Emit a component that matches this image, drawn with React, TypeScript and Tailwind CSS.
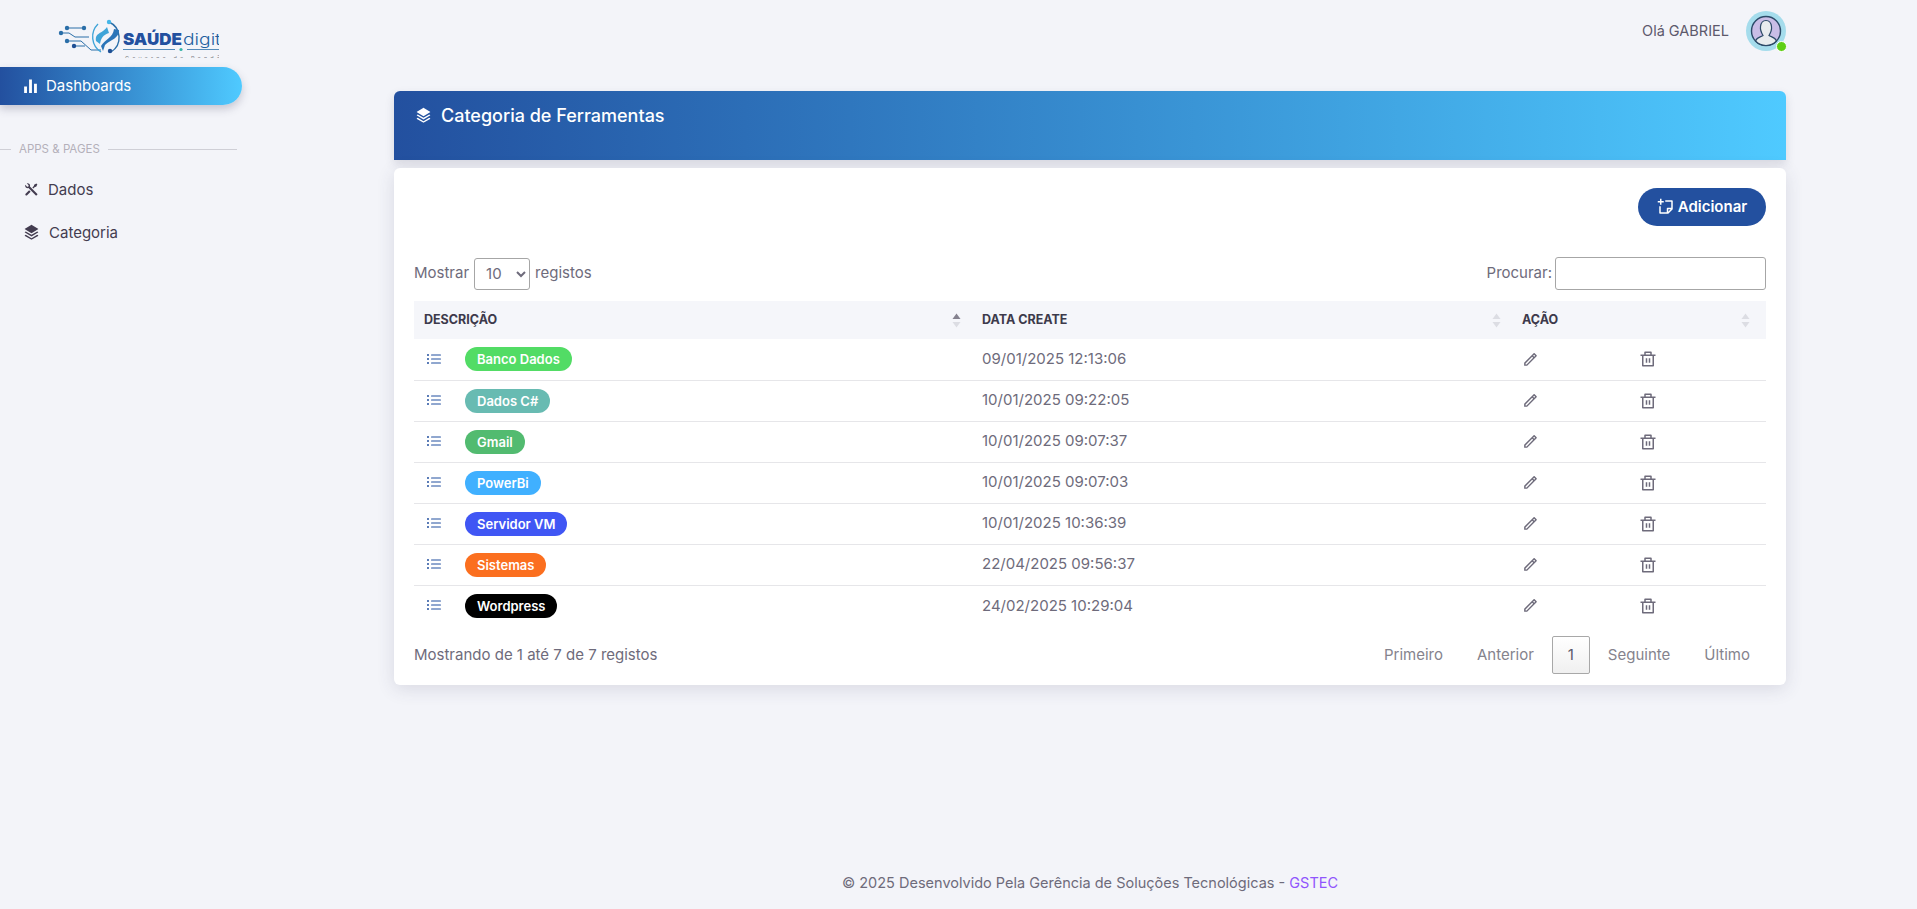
import { RiBarChartFill, RiToolsFill, RiStackFill, RiStickyNoteAddLine, RiPencilLine, RiDeleteBinLine } from 'react-icons/ri';
import { BsListUl } from 'react-icons/bs';

interface Categoria {
  nome: string;
  cor: string;
  data: string;
}

const categorias: Categoria[] = [
  { nome: 'Banco Dados', cor: 'bg-[#52dc65]', data: '09/01/2025 12:13:06' },
  { nome: 'Dados C#', cor: 'bg-[#68bbb2]', data: '10/01/2025 09:22:05' },
  { nome: 'Gmail', cor: 'bg-[#52bb70]', data: '10/01/2025 09:07:37' },
  { nome: 'PowerBi', cor: 'bg-[#40b0ff]', data: '10/01/2025 09:07:03' },
  { nome: 'Servidor VM', cor: 'bg-[#4056f4]', data: '10/01/2025 10:36:39' },
  { nome: 'Sistemas', cor: 'bg-[#fb6f1f]', data: '22/04/2025 09:56:37' },
  { nome: 'Wordpress', cor: 'bg-black', data: '24/02/2025 10:29:04' },
];

function Logo() {
  return (
    <svg viewBox="0 0 190 50" className="h-[50px] w-[190px]">
      <g stroke="#2a6ea8" strokeWidth="1" fill="none">
        <path d="M38 20 H55 M34 25 H40 L46 29 H60 M38 33 H52 L62 42 H72 M45 38 H56" />
        <path d="M69 16 A18 18 0 0 0 72 44" stroke="#3fa4d8" strokeWidth="1.4" />
        <path d="M80 14 A17 17 0 0 1 82 44" stroke="#2a6ea8" strokeWidth="1.4" />
      </g>
      <g fill="#2a6ea8">
        <circle cx="38" cy="20" r="2.2" />
        <circle cx="55" cy="20" r="2.2" />
        <circle cx="32" cy="25" r="2.2" />
        <circle cx="38" cy="33" r="2.2" />
        <circle cx="45" cy="38" r="2.2" fill="#1f4f94" />
        <circle cx="81" cy="43" r="2.2" fill="#1f4f94" />
        <circle cx="80" cy="14" r="2.2" fill="#45b6e8" />
      </g>
      <path d="M67 33 C66 24 72 27 78 19 L80 25 C74 27 72 30 71 36 Z" fill="#3fa4d8" />
      <path d="M90 22 C90 31 82 31 76 37 L74 43 L72 38 C76 31 84 30 85 21 Z" fill="#2a74b8" />
      <text x="94" y="37" fontFamily="Inter, sans-serif" fontWeight="900" fontSize="16.5" fill="#23509f" textLength="59" lengthAdjust="spacingAndGlyphs">SAÚDE</text>
      <text x="154" y="37" fontFamily="Inter, sans-serif" fontWeight="300" fontSize="16" fill="#23609f" textLength="53" lengthAdjust="spacingAndGlyphs">digital</text>
      <path d="M94 41.5 H146 M158 41.5 H209" stroke="#2a6ea8" strokeWidth="0.8" />
      <circle cx="152" cy="41.5" r="1.6" fill="#38b6a8" />
      <text x="96" y="53" fontFamily="Inter, sans-serif" fontSize="5.5" fill="#7d7f86" textLength="112">Governo de Rondônia</text>
    </svg>
  );
}

function Avatar() {
  return (
    <div className="relative h-10 w-10 rounded-full bg-[#a5dcec]">
      <svg viewBox="0 0 40 40" className="h-10 w-10">
        <circle cx="20" cy="20" r="14.5" fill="#c9bde6" stroke="#2c4a68" strokeWidth="1.4" />
        <path d="M9.5 30 C11 26 15 26 17 24.5 C15.5 22 14 19 14.5 15.5 C15 11.5 17.5 9.5 20 9.5 C22.5 9.5 25 11.5 25.5 15.5 C26 19 24.5 22 23 24.5 C25 26 29 26 30.5 30 A14.5 14.5 0 0 1 9.5 30 Z" fill="#e8ecee" stroke="#2c4a68" strokeWidth="1.2" />
      </svg>
      <span className="absolute bottom-[-1px] right-[-1px] h-[11px] w-[11px] rounded-full border-[1.5px] border-white bg-[#5fcf14]" />
    </div>
  );
}

function SortArrows({ active }: { active?: boolean }) {
  return (
    <svg viewBox="0 0 9 15" className="h-[15px] w-[9px]">
      <path d="M4.5 0.5 L8.5 6 H0.5 Z" fill={active ? '#85828f' : '#dcdde3'} />
      <path d="M4.5 14.5 L8.5 9 H0.5 Z" fill="#dcdde3" />
    </svg>
  );
}

export default function App() {
  return (
    <div className="flex min-h-screen bg-[#f3f4f9] font-['Inter',sans-serif] text-[15px] text-[#6e6b7b]">
      <aside className="w-[260px] shrink-0">
        <div className="ml-[29px] h-[67px] pt-[8px]">
          <Logo />
        </div>
        <a className="flex h-[38px] w-[242px] items-center gap-[7px] rounded-r-full bg-gradient-to-r from-[#23509f] to-[#4fcaff] pl-[22px] text-white shadow-[0_4px_8px_rgba(60,60,90,0.25)]">
          <RiBarChartFill className="h-[17px] w-[17px]" />
          <span>Dashboards</span>
        </a>
        <div className="mt-[36px] flex items-center gap-[8px] pr-[23px] text-[11.5px] text-[#b4b0ba]">
          <span className="h-px w-[11px] bg-[#cfcfd6]" />
          <span>APPS &amp; PAGES</span>
          <span className="h-px flex-1 bg-[#cfcfd6]" />
        </div>
        <nav className="mt-[19px] flex flex-col gap-[18px] text-[#433c50]">
          <a className="flex h-[25px] items-center gap-[8px] pl-[23px]">
            <RiToolsFill className="h-[17px] w-[17px]" />
            <span>Dados</span>
          </a>
          <a className="flex h-[25px] items-center gap-[9px] pl-[23px]">
            <RiStackFill className="h-[17px] w-[17px]" />
            <span>Categoria</span>
          </a>
        </nav>
      </aside>

      <main className="flex min-w-0 flex-1 flex-col pl-[134px] pr-[131px]">
        <header className="flex h-[62px] items-center justify-end gap-[17px] text-[#5d596c]">
          <span className="text-[14.5px]">Olá GABRIEL</span>
          <Avatar />
        </header>

        <div className="mt-[29px] flex h-[69px] items-start gap-[9px] rounded-t-[6px] bg-gradient-to-r from-[#23509f] to-[#4fcaff] pl-[21px] pt-[14px] text-white shadow-[0_4px_10px_rgba(60,60,90,0.15)]">
          <RiStackFill className="mt-[2px] h-[17px] w-[17px]" />
          <h1 className="text-[18px] font-medium leading-[22px]">Categoria de Ferramentas</h1>
        </div>

        <section className="mt-[8px] h-[517px] rounded-[6px] bg-white px-[20px] pt-[20px] shadow-[0_4px_18px_rgba(60,60,90,0.14)]">
          <div className="flex justify-end">
            <button className="flex h-[38px] w-[128px] items-center justify-center gap-[3px] rounded-full bg-[#23509f] text-[15px] font-semibold text-white">
              <RiStickyNoteAddLine className="h-[18px] w-[18px]" />
              Adicionar
            </button>
          </div>

          <div className="mt-[31px] flex h-[33px] items-center justify-between">
            <label className="flex items-center gap-[5px]">
              Mostrar
              <select defaultValue="10" className="h-[32px] w-[56px] rounded-[3px] border border-[#a6a6a6] bg-white pl-[7px] text-[15px]">
                <option value="10">10</option>
                <option value="25">25</option>
                <option value="50">50</option>
              </select>
              registos
            </label>
            <label className="flex items-center gap-[3px]">
              Procurar:
              <input className="h-[33px] w-[211px] rounded-[3px] border border-[#a6a6a6] bg-white" />
            </label>
          </div>

          <table className="mt-[11px] w-full table-fixed border-collapse">
            <colgroup>
              <col className="w-[558px]" />
              <col className="w-[540px]" />
              <col className="w-[118px]" />
              <col />
            </colgroup>
            <thead>
              <tr className="h-[38px] bg-[#f5f6fa] text-left text-[12.5px] font-bold text-[#3d3a4b]">
                <th className="pl-[10px] pr-[11px] font-bold">
                  <div className="flex items-center justify-between">DESCRIÇÃO <SortArrows active /></div>
                </th>
                <th className="pl-[10px] pr-[11px] font-bold">
                  <div className="flex items-center justify-between">DATA CREATE <SortArrows /></div>
                </th>
                <th colSpan={2} className="pl-[10px] pr-[16px] font-bold">
                  <div className="flex items-center justify-between">AÇÃO <SortArrows /></div>
                </th>
              </tr>
            </thead>
            <tbody>
              {categorias.map((c, i) => (
                <tr key={c.nome} className={i < categorias.length - 1 ? 'h-[41px] border-b border-[#e6e6e9]' : 'h-[41px]'}>
                  <td className="pl-[12px]">
                    <div className="flex items-center gap-[23px]">
                      <BsListUl className="h-[17px] w-[16px] text-[#23509f]" />
                      <span className={`rounded-full px-[12px] text-[13px] font-semibold leading-[24px] text-white ${c.cor}`}>{c.nome}</span>
                    </div>
                  </td>
                  <td className="pl-[10px]">{c.data}</td>
                  <td className="pl-[10px]">
                    <RiPencilLine className="h-[17px] w-[17px]" />
                  </td>
                  <td className="pl-[9px]">
                    <RiDeleteBinLine className="h-[18px] w-[18px]" />
                  </td>
                </tr>
              ))}
            </tbody>
          </table>

          <div className="mt-[10px] flex items-center justify-between">
            <span>Mostrando de 1 até 7 de 7 registos</span>
            <div className="flex items-center text-[#85838d]">
              <span className="px-[16px]">Primeiro</span>
              <span className="px-[18px]">Anterior</span>
              <span className="flex h-[38px] w-[38px] items-center justify-center rounded-[2px] border border-[#a8a8a8] bg-gradient-to-b from-white to-[#f0f0f0] text-[#5d596c]">1</span>
              <span className="px-[18px]">Seguinte</span>
              <span className="pl-[16px] pr-[16px]">Último</span>
            </div>
          </div>
        </section>

        <footer className="mt-auto pb-[16px] text-center text-[14.5px] leading-[20px]">
          © 2025 Desenvolvido Pela Gerência de Soluções Tecnológicas - <span className="text-[#9055fd]">GSTEC</span>
        </footer>
      </main>
    </div>
  );
}
